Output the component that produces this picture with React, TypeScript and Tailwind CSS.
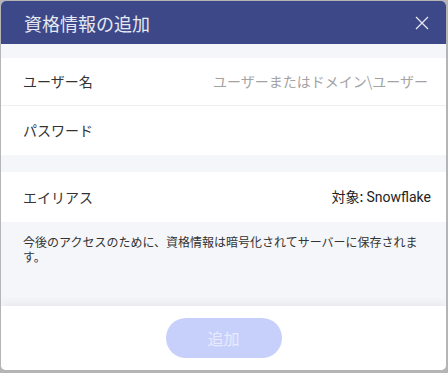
import React from "react";

export default function App() {
  return (
    <div
      className="w-[448px] h-[373px] bg-[#b5b5b5] pt-px pl-px"
      style={{ fontFamily: '"Noto Sans CJK JP", "Noto Sans", sans-serif' }}
    >
      <div className="w-[445px] h-[369px] bg-white rounded-[5px] overflow-hidden flex flex-col">
        <div className="h-[43px] bg-[#3d4889] flex items-center justify-between pl-[23px] pr-[17px] shrink-0">
          <span className="text-[18px] text-[#e6e8f2] leading-none">資格情報の追加</span>
          <svg width="14" height="14" viewBox="0 0 14 14" className="text-[#e6e8f2]">
            <path d="M1 1L13 13M13 1L1 13" stroke="currentColor" strokeWidth="1.3" fill="none" />
          </svg>
        </div>
        <div className="h-[14px] bg-[#f5f6fa] shrink-0" />
        <div className="h-[48px] border-b border-[#eeeff3] flex items-center justify-between pl-[22px] pr-[18px] shrink-0">
          <span className="text-[14px] text-[#333333]">ユーザー名</span>
          <span className="text-[14px] text-[#a3a3a3]">ユーザーまたはドメイン\ユーザー</span>
        </div>
        <div className="h-[49px] flex items-center pl-[22px] pr-[18px] shrink-0">
          <span className="text-[14px] text-[#333333]">パスワード</span>
        </div>
        <div className="h-[17px] bg-[#f5f6fa] shrink-0" />
        <div className="h-[50px] flex items-center justify-between pl-[22px] pr-[15px] shrink-0">
          <span className="text-[14px] text-[#333333]">エイリアス</span>
          <span className="text-[14px] text-[#222222]">
            対象: <span style={{ fontFamily: 'Roboto, sans-serif' }}>Snowflake</span>
          </span>
        </div>
        <div className="flex-1 bg-[#f5f6fa] pl-[22px] pr-[20px] pt-[12px] text-[12px] leading-[15px] text-[#333333]">
          今後のアクセスのために、資格情報は暗号化されてサーバーに保存されます。
        </div>
        <div className="h-[64px] shrink-0 flex items-center justify-center bg-white shadow-[0_-3px_8px_rgba(0,0,0,0.06)] relative">
          <button className="w-[116px] h-[40px] rounded-full bg-[#c7d0fb] text-[#e8ebfe] text-[16px]">
            追加
          </button>
        </div>
      </div>
    </div>
  );
}
